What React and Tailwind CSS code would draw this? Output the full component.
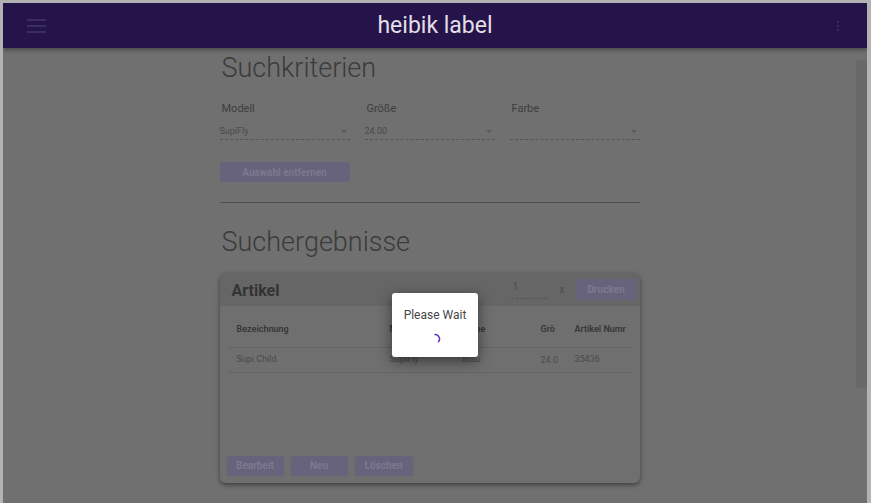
import React from 'react';

const font = { fontFamily: 'Roboto, "Liberation Sans", sans-serif' };

function SelectField({ label, value }) {
  return (
    <div className="w-[130px]">
      <div className="text-[11px] text-[#3e3e3e] pl-[2px] h-[16px] leading-[16px]">{label}</div>
      <div className="mt-[6px] h-[17px] flex items-center justify-between border-b border-dashed border-[#555] pr-[3px]">
        <span className="text-[9px] text-[#4a4a4a] leading-none">{value}</span>
        <span className="w-0 h-0 border-l-[3px] border-r-[3px] border-t-[3px] border-l-transparent border-r-transparent border-t-[#5a5a5a]" />
      </div>
    </div>
  );
}

function DimButton({ children, className = '' }) {
  return (
    <button className={`bg-[#68637c] text-[#7d798e] font-bold text-[10px] rounded-[2px] ${className}`}>
      {children}
    </button>
  );
}

export default function App() {
  return (
    <div style={font} className="w-[871px] h-[503px] overflow-hidden bg-[#707070] border-t-[3px] border-l-[3px] border-r-[4px] border-[#b3b3b3] flex flex-col">
      {/* Toolbar */}
      <div className="h-[45px] shrink-0 bg-[#24144a] grid grid-cols-[1fr_auto_1fr] items-center px-[24px] shadow-[0_2px_4px_rgba(0,0,0,0.35)] relative z-10">
        <div className="flex flex-col gap-[4px]">
          <span className="block w-[19px] h-[2px] bg-[#3b2d5e]" />
          <span className="block w-[19px] h-[2px] bg-[#3b2d5e]" />
          <span className="block w-[19px] h-[2px] bg-[#3b2d5e]" />
        </div>
        <div className="text-[23px] text-[#e2dfe8] leading-none">heibik label</div>
        <div className="flex flex-col items-end gap-[2px] pr-[4px]">
          <span className="block w-[2px] h-[2px] bg-[#3b2d5e]" />
          <span className="block w-[2px] h-[2px] bg-[#3b2d5e]" />
          <span className="block w-[2px] h-[2px] bg-[#3b2d5e]" />
        </div>
      </div>

      <div className="flex flex-1 min-h-0">
        {/* Content */}
        <div className="flex-1">
          <div className="w-[420px] mx-auto">
            <h1 className="mt-[4px] h-[32px] leading-[32px] text-[27px] font-light text-[#3b3b3b] pl-[2px]">Suchkriterien</h1>

            <div className="mt-[17px] flex justify-between">
              <SelectField label="Modell" value="SupiFly" />
              <SelectField label="Größe" value="24.00" />
              <SelectField label="Farbe" value="" />
            </div>

            <DimButton className="mt-[22px] w-[130px] h-[20px]">Auswahl entfernen</DimButton>

            <div className="mt-[19px] border-t border-[#4f4f4f]" />

            <h2 className="mt-[23px] h-[32px] leading-[32px] text-[27px] font-light text-[#3b3b3b] pl-[2px]">Suchergebnisse</h2>

            {/* Card */}
            <div className="mt-[15px] h-[210px] rounded-[6px] shadow-[0_2px_5px_rgba(0,0,0,0.45)] bg-[#6f6f6f] flex flex-col">
              <div className="h-[33px] bg-[#666666] rounded-t-[6px] flex items-center pl-[12px] pr-[3px]">
                <span className="text-[16px] font-bold text-[#333] pt-[4px]">Artikel</span>
                <div className="ml-auto w-[36px] h-[19px] border-b border-dashed border-[#555] text-[10px] text-[#4c4c4c] pl-[2px] leading-[14px]">1</div>
                <span className="ml-[13px] text-[10px] text-[#4c4c4c]">x</span>
                <DimButton className="ml-[11px] w-[61px] h-[21px]">Drucken</DimButton>
              </div>

              <div className="mx-[7px] h-[142px] text-[9px]">
                <div className="mt-[8px] h-[34px] grid grid-cols-[163px_73px_68px_35px_1fr] items-center border-b border-[#656565] font-semibold text-[#363636]">
                  <span className="pl-[10px]">Bezeichnung</span>
                  <span>Modell</span>
                  <span>Farbe</span>
                  <span className="pl-[10px]">Grö</span>
                  <span className="pl-[9px]">Artikel Numr</span>
                </div>
                <div className="h-[25px] grid grid-cols-[163px_73px_68px_35px_1fr] items-center border-b border-[#656565] text-[#4a4a4a]">
                  <span className="pl-[10px]">Supi Child</span>
                  <span>SupiFly</span>
                  <span>Blau</span>
                  <span className="pl-[10px] pt-[2px]">24.0</span>
                  <span className="pl-[9px]">35436</span>
                </div>
              </div>

              <div className="mt-[8px] px-[7px] flex gap-[7px]">
                <DimButton className="w-[57px] h-[20px]">Bearbeit</DimButton>
                <DimButton className="w-[57px] h-[20px]">Neu</DimButton>
                <DimButton className="w-[58px] h-[20px]">Löschen</DimButton>
              </div>
            </div>
          </div>
        </div>

        {/* Scrollbar */}
        <div className="w-[11px] shrink-0 flex flex-col">
          <div className="h-[12px]" />
          <div className="h-[328px] bg-[#686868]" />
        </div>
      </div>

      {/* Please wait dialog */}
      <div className="absolute top-[293px] left-[392px] w-[86px] h-[64px] bg-white rounded-[3px] shadow-[0_4px_14px_rgba(0,0,0,0.5)] flex flex-col items-center z-20">
        <div className="mt-[15px] text-[12px] text-[#454545] leading-[14px]">Please Wait</div>
        <svg className="mt-[11px]" width="12" height="12" viewBox="0 0 12 12">
          <path d="M6 1.5 A4.5 4.5 0 0 1 9.6 8.7" fill="none" stroke="#673ab7" strokeWidth="1.6" strokeLinecap="round" />
        </svg>
      </div>
    </div>
  );
}
